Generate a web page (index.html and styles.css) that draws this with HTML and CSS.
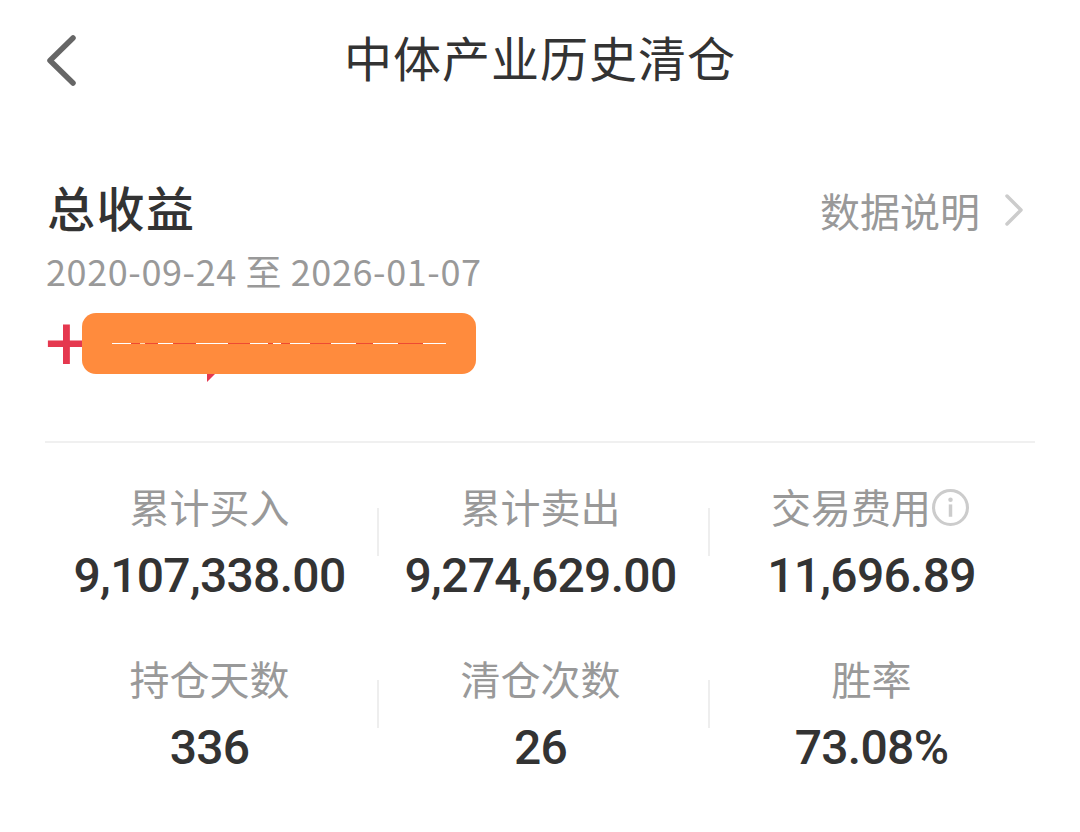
FILE: index.html
```html
<!DOCTYPE html>
<html lang="zh-CN">
  <head>
    <meta charset="UTF-8" />
    <meta name="viewport" content="width=device-width, initial-scale=1.0" />
    <title>中体产业历史清仓</title>
    <link rel="stylesheet" href="styles.css">
  </head>

  <body>
    <header class="top-bar">
      <svg class="back-icon" width="32" height="54" viewBox="0 0 32 54">
        <path d="M28 4 L5 26.500 L28 49" fill="none" stroke="#666" stroke-width="5.500" stroke-linecap="round" stroke-linejoin="round" />
      </svg>
      <h1>中体产业历史清仓</h1>
    </header>

    <main class="content">
      <div class="summary-head">
        <h2>总收益</h2>
        <div class="data-note">
          <span>数据说明</span>
          <svg width="20" height="34" viewBox="0 0 20 34">
            <path d="M3 3 L17 17 L3 31" fill="none" stroke="#ccc" stroke-width="3.500" stroke-linecap="round" stroke-linejoin="round" />
          </svg>
        </div>
      </div>
      <div class="date-range">2020-09-24 至 2026-01-07</div>

      <div class="profit">
        <span class="plus">+</span>
        <span class="profit-tail"></span>
        <!-- redacted amount -->
        <div class="redact"><div class="redact-line"></div></div>
      </div>

      <div class="stats">
        <div class="stat">
          <div class="label">累计买入</div>
          <div class="value">9,107,338.00</div>
        </div>
        <div class="stat">
          <div class="label">累计卖出</div>
          <div class="value">9,274,629.00</div>
        </div>
        <div class="stat">
          <div class="label">交易费用<svg class="info-icon" width="37" height="37" viewBox="0 0 36 36">
              <circle cx="18" cy="18" r="16.500" fill="none" stroke="#ccc" stroke-width="3" />
              <circle cx="18" cy="10.500" r="2.200" fill="#ccc" />
              <rect x="16.300" y="15" width="3.400" height="12" fill="#ccc" />
            </svg></div>
          <div class="value">11,696.89</div>
        </div>
        <div class="stat">
          <div class="label">持仓天数</div>
          <div class="value">336</div>
        </div>
        <div class="stat">
          <div class="label">清仓次数</div>
          <div class="value">26</div>
        </div>
        <div class="stat">
          <div class="label">胜率</div>
          <div class="value">73.08%</div>
        </div>
      </div>
    </main>
  </body>
</html>
```

FILE: styles.css
```css
body {
  margin: 0;
  background-color: #fff;
  font-family: "Noto Sans CJK SC", "Noto Sans", sans-serif;
  color: #333;
}

.top-bar {
  position: relative;
  height: 120px;
  display: flex;
  justify-content: center;
}
.top-bar h1 {
  margin: 0;
  font-size: 48px;
  font-weight: 400;
  line-height: 112px;
  letter-spacing: 1px;
}
.back-icon {
  position: absolute;
  left: 45px;
  top: 34px;
}

.content {
  padding: 56px 45px 0;
}

.summary-head {
  display: flex;
  justify-content: space-between;
  align-items: center;
  height: 60px;
}
.summary-head h2 {
  margin: 0 0 0 2px;
  font-size: 48px;
  font-weight: 500;
  line-height: 60px;
  letter-spacing: 1.500px;
}
.data-note {
  display: flex;
  align-items: center;
  gap: 24px;
  font-size: 40px;
  color: #999;
  padding-right: 11px;
  margin-top: 8px;
}

.date-range {
  margin-top: 12px;
  font-size: 36px;
  line-height: 44px;
  color: #999;
  letter-spacing: 0.600px;
  margin-left: 1px;
}

.profit {
  position: relative;
  height: 60px;
  margin-top: 21px;
  padding-bottom: 68px;
  border-bottom: 2px solid #f0f0f0;
}
.plus {
  position: absolute;
  left: 0;
  top: -9px;
  font-family: "Roboto", sans-serif;
  font-size: 76px;
  font-weight: 400;
  line-height: 80px;
  color: #e5384f;
}
.profit-tail {
  position: absolute;
  left: 162px;
  top: 58px;
  width: 0;
  height: 0;
  border-top: 11px solid #e5384f;
  border-right: 11px solid transparent;
}
.redact {
  position: absolute;
  left: 37px;
  top: 0;
  width: 394px;
  height: 61px;
  display: flex;
  align-items: center;
  justify-content: center;
  background-color: #ff8b3d;
  border-radius: 14px;
}
.redact-line {
  width: 334px;
  height: 1px;
  background: linear-gradient(90deg,
    #fff 0 19px, #ee4a32 19px 28px, #ffd9b8 28px 33px, #ee4a32 33px 46px,
    #fff 46px 61px, #ee4a32 61px 84px, #fff 84px 116px, #ee4a32 116px 138px,
    #fff 138px 156px, #ee4a32 156px 161px, #fff 161px 169px, #ee4a32 169px 178px,
    #fff 178px 198px, #ee4a32 198px 219px, #fff 219px 244px, #ee4a32 244px 261px,
    #fff 261px 286px, #ee4a32 286px 311px, #fff 311px 334px);
}

.stats {
  display: grid;
  grid-template-columns: repeat(3, 331px);
  grid-auto-rows: 172px;
  margin-top: 37px;
  margin-left: -1px;
}
.stat {
  position: relative;
  display: flex;
  flex-direction: column;
  align-items: center;
  text-align: center;
}
.stat:not(:nth-child(3n + 1))::before {
  content: "";
  position: absolute;
  left: 2px;
  top: 28px;
  width: 2px;
  height: 48px;
  background-color: #eee;
}
.label {
  display: flex;
  align-items: center;
  margin-top: -2px;
  font-size: 40px;
  line-height: 56px;
  color: #999;
}
.info-icon {
  margin-left: 1px;
  margin-right: 3px;
  margin-top: 2px;
}
.value {
  margin-top: 12px;
  font-family: "Roboto", sans-serif;
  font-size: 48px;
  font-weight: 500;
  line-height: 60px;
  letter-spacing: -0.700px;
  color: #333;
}
```
